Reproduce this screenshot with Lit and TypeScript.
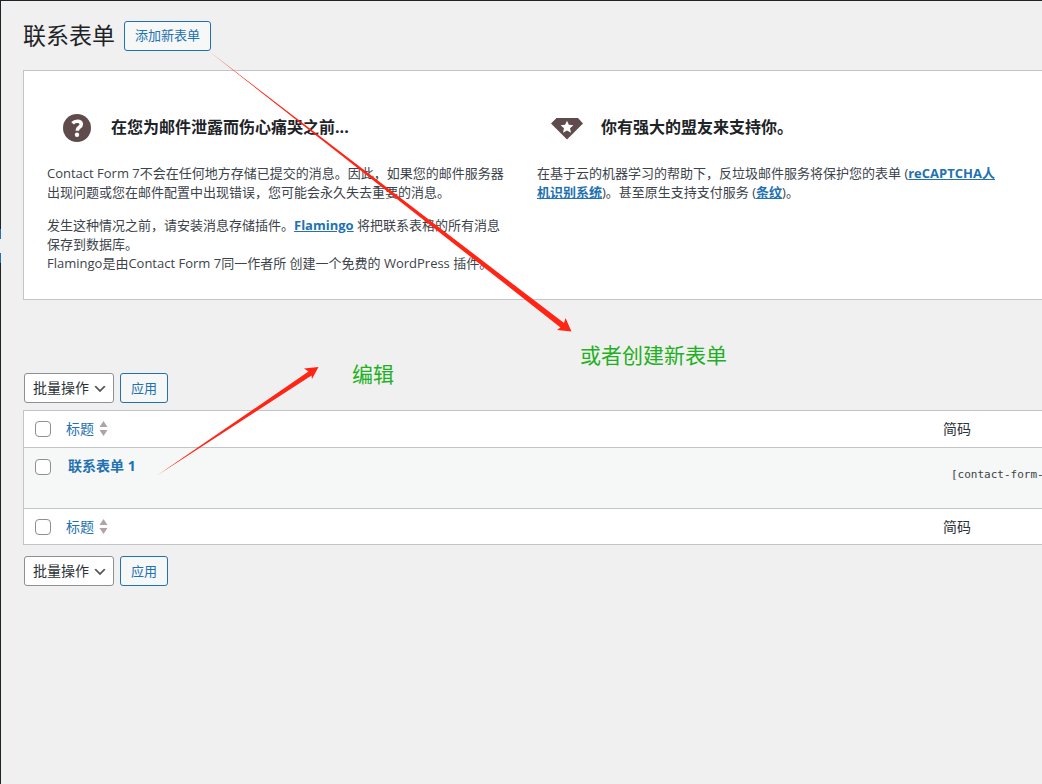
import { LitElement, html, css, svg } from "lit";
import { customElement, property } from "lit/decorators.js";

@customElement("bulk-actions")
class BulkActions extends LitElement {
  @property() name = "action";

  static styles = css`
    :host {
      display: flex;
      gap: 6px;
      padding-left: 1px;
    }
    .select,
    .apply {
      box-sizing: border-box;
      height: 30px;
      margin: 0;
      font-family: inherit;
      border-radius: 3px;
    }
    .select {
      appearance: none;
      width: 90px;
      padding: 0 24px 2px 8px;
      font-size: 14px;
      color: #2c3338;
      border: 1px solid #8c8f94;
      background: #fff
        url("data:image/svg+xml,%3Csvg xmlns='http://www.w3.org/2000/svg' viewBox='0 0 20 20'%3E%3Cpath d='M5 6l5 5 5-5 2 1-7 7-7-7 2-1z' fill='%23555'/%3E%3C/svg%3E")
        no-repeat right 5px top 7px / 16px 16px;
    }
    .apply {
      width: 48px;
      padding: 0 0 2px;
      font-size: 13px;
      color: #2271b1;
      border: 1px solid #2271b1;
      background: #f6f7f7;
    }
  `;

  render() {
    return html`
      <select class="select" name=${this.name} aria-label="批量操作">
        <option>批量操作</option>
      </select>
      <button class="apply" type="button">应用</button>
    `;
  }
}

@customElement("app-root")
class AppRoot extends LitElement {
  static styles = css`
    :host {
      display: block;
      position: relative;
      box-sizing: border-box;
      min-height: 100vh;
      overflow: hidden;
      background: #f0f0f0;
      border-top: 1px solid #1d2327;
      color: #3c434a;
      font-family: "Open Sans", "Noto Sans CJK SC", sans-serif;
      font-size: 13px;
      line-height: 19px;
    }
    a {
      color: #2271b1;
    }
    .rail {
      position: absolute;
      left: 0;
      top: 0;
      bottom: 0;
      width: 1px;
      background: linear-gradient(
        #1d2327 228px,
        #2271b1 228px 238px,
        #f0f0f0 238px 252px,
        #2271b1 252px 262px,
        #1d2327 262px
      );
    }
    .page {
      padding: 20px 0 20px 23px;
    }
    .top {
      display: flex;
      align-items: center;
      gap: 9px;
      height: 30px;
    }
    .title {
      margin: 0;
      padding-bottom: 2px;
      font-size: 23px;
      line-height: 28px;
      font-weight: 400;
      color: #1d2327;
    }
    .add {
      box-sizing: border-box;
      height: 30px;
      padding: 0 10px;
      border: 1px solid #2271b1;
      border-radius: 3px;
      background: #f6f7f7;
      line-height: 27px;
      text-decoration: none;
    }
    .panel {
      display: grid;
      grid-template-columns: 1fr 1fr;
      column-gap: 31px;
      margin-top: 19px;
      padding: 37px 46px 12px 23px;
      border: 1px solid #c3c4c7;
      border-right: 0;
      background: #fff;
    }
    .head {
      display: flex;
      align-items: center;
      gap: 16px;
      height: 40px;
      margin-bottom: 16px;
      padding-left: 12px;
    }
    .icon {
      width: 36px;
      height: 36px;
      flex: none;
      fill: #5f4b4b;
    }
    .subtitle {
      margin: 0;
      padding-bottom: 2px;
      font-size: 16px;
      font-weight: 700;
      color: #1d2327;
      white-space: nowrap;
    }
    .para {
      margin: 0 0 14px;
    }
    .strong {
      font-weight: 700;
    }
    .bulk-top {
      margin: 73px 0 7px;
    }
    .bulk-bottom {
      margin-top: 11px;
    }
    .table {
      width: 100%;
      table-layout: fixed;
      border-collapse: separate;
      border-spacing: 0;
      border: 1px solid #c3c4c7;
      border-right: 0;
      background: #fff;
      font-size: 14px;
    }
    .table th {
      height: 34px;
      padding: 0 8px 2px;
      text-align: left;
      font-weight: 400;
      color: #2c3338;
    }
    .table tfoot th {
      height: 35px;
      padding-bottom: 0;
    }
    .table td {
      height: 62px;
      box-sizing: border-box;
      padding: 8px 0 0 10px;
      vertical-align: top;
      background: #f6f7f7;
      border-top: 1px solid #c3c4c7;
      border-bottom: 1px solid #c3c4c7;
    }
    .table .tick,
    .table td.tick {
      width: 18px;
      padding: 0 5px 0 11px;
    }
    .table td.tick {
      padding-top: 11px;
    }
    .table td.code {
      padding: 17px 0 0 8px;
    }
    .table th.code {
      width: 91px;
    }
    .box {
      appearance: none;
      display: block;
      box-sizing: border-box;
      width: 16px;
      height: 16px;
      margin: 0;
      border: 1px solid #8c8f94;
      border-radius: 4px;
      background: #fff;
    }
    .sort {
      display: inline-flex;
      align-items: center;
      gap: 5px;
      text-decoration: none;
    }
    .arrows {
      width: 9px;
      height: 15px;
      fill: #b0a3a5;
    }
    .name {
      font-weight: 700;
      text-decoration: none;
    }
    .shortcode {
      display: block;
      box-sizing: border-box;
      width: 100%;
      height: 18px;
      margin: 0;
      padding: 0 0 0 8px;
      border: 0;
      background: transparent;
      color: #3c434a;
      font-family: "DejaVu Sans Mono", monospace;
      font-size: 11px;
    }
    .marks {
      position: absolute;
      left: 0;
      top: 0;
      width: 600px;
      height: 500px;
      fill: #ff2414;
      pointer-events: none;
    }
    .note {
      position: absolute;
      color: #22b022;
      font-size: 21px;
      line-height: 28px;
    }
    .note-create {
      left: 580px;
      top: 340px;
    }
    .note-edit {
      left: 352px;
      top: 359px;
    }
  `;

  private headings(id: string) {
    return html`
      <tr>
        <th class="tick"><input class="box" type="checkbox" id=${id} aria-label="全选" /></th>
        <th>
          <a class="sort" href="#"
            >标题
            <svg class="arrows" viewBox="0 0 9 15" aria-hidden="true">
              ${svg`<path d="M4.500 0L8.500 6H.5zM4.500 15L8.500 9H.5z"/>`}
            </svg>
          </a>
        </th>
        <th class="code">简码</th>
      </tr>
    `;
  }

  render() {
    return html`
      <div class="rail"></div>
      <main class="page">
        <header class="top">
          <h1 class="title">联系表单</h1>
          <a class="add" href="#">添加新表单</a>
        </header>

        <section class="panel">
          <div>
            <div class="head">
              <svg class="icon" viewBox="0 0 36 36" aria-hidden="true">
                <circle cx="18" cy="18" r="14" />
                <path
                  d="M13.500 13.200q2-2 4.700-2 4.100 0 4.100 3.100 0 1.700-2 3-1.900 1.200-1.900 2.900v.6"
                  fill="none"
                  stroke="#fff"
                  stroke-width="3.600"
                />
                <circle cx="18" cy="24.800" r="2.200" fill="#fff" />
              </svg>
              <h2 class="subtitle">在您为邮件泄露而伤心痛哭之前...</h2>
            </div>
            <p class="para">
              Contact Form 7不会在任何地方存储已提交的消息。因此，如果您的邮件服务器出现问题或您在邮件配置中出现错误，您可能会永久失去重要的消息。
            </p>
            <p class="para">
              发生这种情况之前，请安装消息存储插件。<a class="strong" href="#">Flamingo</a>
              将把联系表格的所有消息保存到数据库。<br />Flamingo是由Contact Form 7同一作者所 创建一个免费的 WordPress 插件。
            </p>
          </div>
          <div>
            <div class="head">
              <svg class="icon" viewBox="0 0 36 36" aria-hidden="true">
                <path
                  fill-rule="evenodd"
                  d="M7.500 8h21.500L34 13.500 18 29.500 2 13.500zM18 10.700l-1.900 4.100-4.500.5 3.400 3-1 4.500 4-2.300 4 2.300-1-4.500 3.400-3-4.500-.5z"
                />
              </svg>
              <h2 class="subtitle">你有强大的盟友来支持你。</h2>
            </div>
            <p class="para">
              在基于云的机器学习的帮助下，反垃圾邮件服务将保护您的表单 (<a class="strong" href="#">reCAPTCHA人机识别系统</a>)。甚至原生支持支付服务
              (<a class="strong" href="#">条纹</a>)。
            </p>
          </div>
        </section>

        <bulk-actions class="bulk-top" name="action"></bulk-actions>
        <table class="table">
          <thead>
            ${this.headings("all-top")}
          </thead>
          <tbody>
            <tr>
              <td class="tick"><input class="box" type="checkbox" aria-label="联系表单 1" /></td>
              <td><a class="name" href="#">联系表单 1</a></td>
              <td class="code">
                <input class="shortcode" type="text" readonly aria-label="简码" value="[contact-form-7" />
              </td>
            </tr>
          </tbody>
          <tfoot>
            ${this.headings("all-bottom")}
          </tfoot>
        </table>
        <bulk-actions class="bulk-bottom" name="action2"></bulk-actions>
      </main>

      <svg class="marks" viewBox="0 1 600 500" aria-hidden="true">
        <path d="M208 50.500L564 323 565.500 318 571.500 331.500 557 330 560.500 327.500z" />
        <path d="M157 475.500L308.500 371.500 304 368.500 318.500 367 312 379 311.500 375.500z" />
      </svg>
      <span class="note note-create">或者创建新表单</span>
      <span class="note note-edit">编辑</span>
    `;
  }
}
